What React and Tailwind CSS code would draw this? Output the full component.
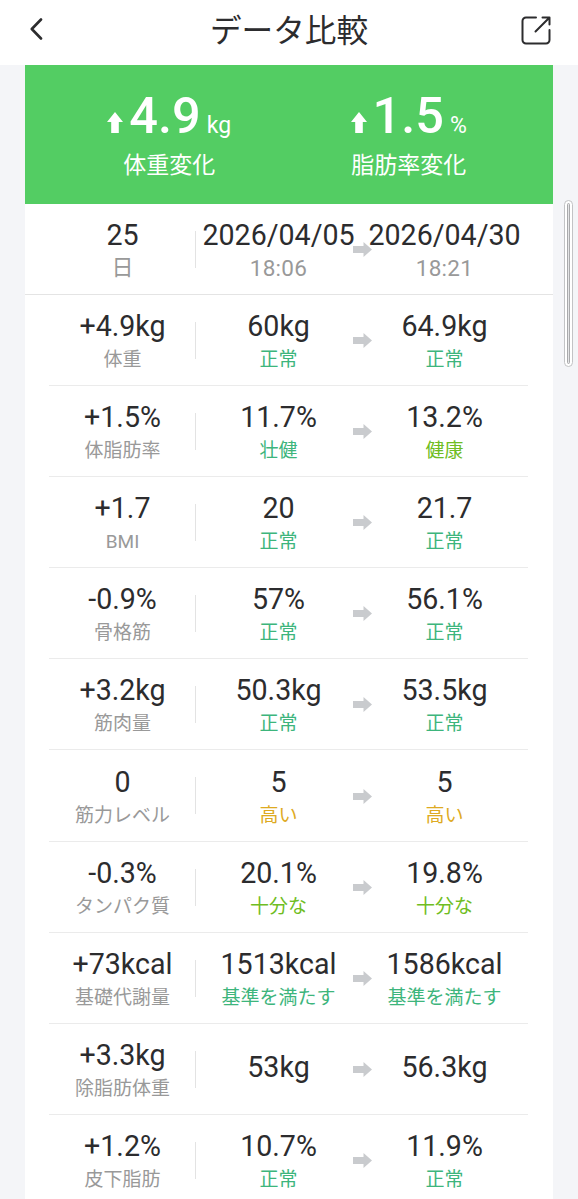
const STATUS_COLORS = {
  normal: 'text-[#3db57c]',
  good: 'text-[#6fbd22]',
  high: 'text-[#deaa22]',
}

const rows = [
  { diff: '+4.9kg', label: '体重', from: ['60kg', '正常', 'normal'], to: ['64.9kg', '正常', 'normal'] },
  { diff: '+1.5%', label: '体脂肪率', from: ['11.7%', '壮健', 'normal'], to: ['13.2%', '健康', 'good'] },
  { diff: '+1.7', label: 'BMI', from: ['20', '正常', 'normal'], to: ['21.7', '正常', 'normal'] },
  { diff: '-0.9%', label: '骨格筋', from: ['57%', '正常', 'normal'], to: ['56.1%', '正常', 'normal'] },
  { diff: '+3.2kg', label: '筋肉量', from: ['50.3kg', '正常', 'normal'], to: ['53.5kg', '正常', 'normal'] },
  { diff: '0', label: '筋力レベル', from: ['5', '高い', 'high'], to: ['5', '高い', 'high'] },
  { diff: '-0.3%', label: 'タンパク質', from: ['20.1%', '十分な', 'good'], to: ['19.8%', '十分な', 'good'] },
  { diff: '+73kcal', label: '基礎代謝量', from: ['1513kcal', '基準を満たす', 'normal'], to: ['1586kcal', '基準を満たす', 'normal'] },
  { diff: '+3.3kg', label: '除脂肪体重', from: ['53kg'], to: ['56.3kg'] },
  { diff: '+1.2%', label: '皮下脂肪', from: ['10.7%', '正常', 'normal'], to: ['11.9%', '正常', 'normal'] },
]

function ArrowRight() {
  return (
    <svg className="absolute right-[156px] top-1/2 -mt-[7px] h-[15px] w-[19px]" viewBox="0 0 19 15" fill="#c9cbce">
      <path d="M0 4h10.5V0L19 7.5 10.5 15v-4H0z" />
    </svg>
  )
}

function ArrowUp() {
  return (
    <svg className="mb-[13px] h-[21px] w-[16px]" viewBox="0 0 16 21" fill="#fff">
      <path d="M8 0l8 10h-4.2v11H4.2V10H0z" />
    </svg>
  )
}

function Cell({ value, sub, subClass, className = '' }) {
  return (
    <div className={`flex flex-col items-center justify-center whitespace-nowrap pl-px ${className}`}>
      <span className="text-[28.6px] leading-[34px]">{value}</span>
      {sub && <span className={`flex h-[30px] items-center leading-[30px] ${subClass}`}>{sub}</span>}
    </div>
  )
}

function Row({ children }) {
  return (
    <div className="relative grid h-full grid-cols-[146px_166px_166px]">
      {children}
      <div className="absolute left-[146px] top-[27px] h-[37px] w-px bg-[#e3e3e3]" />
      <ArrowRight />
    </div>
  )
}

function Change({ value, unit, label }) {
  return (
    <div className="flex flex-col items-center">
      <div className="flex items-end">
        <ArrowUp />
        <span className="ml-[6px] text-[50.5px] font-medium leading-[60px]">{value}</span>
        <span className="mb-[6px] ml-[6px] text-[23px] leading-[28px]">{unit}</span>
      </div>
      <span className="mt-[6px] text-[23px] leading-[28px]">{label}</span>
    </div>
  )
}

export default function App() {
  return (
    <div className="relative flex h-[1199px] w-[578px] flex-col overflow-hidden bg-[#f4f5f8] font-['Roboto','Noto_Sans_CJK_JP',sans-serif] text-[#2c2c2e]">
      <header className="flex h-[65px] shrink-0 items-center justify-between bg-white pl-[30px] pr-[27px]">
        <svg className="mb-[7px] h-[22px] w-[25px]" viewBox="0 0 25 22" fill="none" stroke="#2c2c2e" strokeWidth="2.6" strokeLinecap="round" strokeLinejoin="round">
          <path d="M11 1.5L1.8 11l9.2 9.5" />
        </svg>
        <h1 className="mb-[2px] ml-[2px] text-[31.6px] leading-[40px]">データ比較</h1>
        <svg className="mb-[4px] h-[29px] w-[30px]" viewBox="0 0 30 29" fill="none" stroke="#2c2c2e" strokeWidth="2" strokeLinecap="round" strokeLinejoin="round">
          <path d="M15 1.5H5A3.5 3.5 0 0 0 1.500 5v19A3.500 3.500 0 0 0 5 27.500h20a3.500 3.500 0 0 0 3.500-3.500V14" />
          <path d="M14.500 15.500L28 2M21.500 1.500h7v7" />
        </svg>
      </header>

      <main className="mx-[25px] flex-1 bg-white">
        {/* Summary */}
        <section className="grid h-[139px] grid-cols-2 bg-[#53cd63] px-[24.500px] pt-[21px] text-white">
          <Change value="4.9" unit="kg" label="体重変化" />
          <Change value="1.5" unit="%" label="脂肪率変化" />
        </section>

        {/* Compared dates */}
        <div className="h-[91px] border-b border-[#e4e4e4] pl-[24px] pr-[25px]">
          <Row>
            <Cell value="25" sub="日" className="pt-[3px]" subClass="mt-px text-[22px] text-[#999]" />
            <Cell value="2026/04/05" sub="18:06" className="pt-[3px]" subClass="mt-px text-[22.5px] tracking-[0.3px] text-[#999]" />
            <Cell value="2026/04/30" sub="18:21" className="pt-[3px]" subClass="mt-px text-[22.5px] tracking-[0.3px] text-[#999]" />
          </Row>
        </div>

        {/* Metrics */}
        {rows.map((row) => (
          <div key={row.label} className="ml-[24px] mr-[25px] h-[91.1px] border-b border-[#ebebeb]">
            <Row>
              <Cell value={row.diff} sub={row.label} className="pt-[4px]" subClass="mt-[2px] text-[19px] text-[#999]" />
              {[row.from, row.to].map(([value, sub, status], i) => (
                <Cell
                  key={i}
                  value={value}
                  sub={sub}
                  className={sub ? 'pt-[4px]' : 'pb-[3px]'}
                  subClass={`mt-[2px] text-[19px] ${STATUS_COLORS[status]}`}
                />
              ))}
            </Row>
          </div>
        ))}
      </main>

      {/* Scroll thumb */}
      <div className="absolute left-[564px] top-[200px] flex h-[167px] w-[9px] rounded-full border border-[#c2c3c5] bg-white p-[2px]">
        <div className="flex-1 rounded-full border border-[#a9aaac] bg-[#e4e4e6]" />
      </div>
    </div>
  )
}
